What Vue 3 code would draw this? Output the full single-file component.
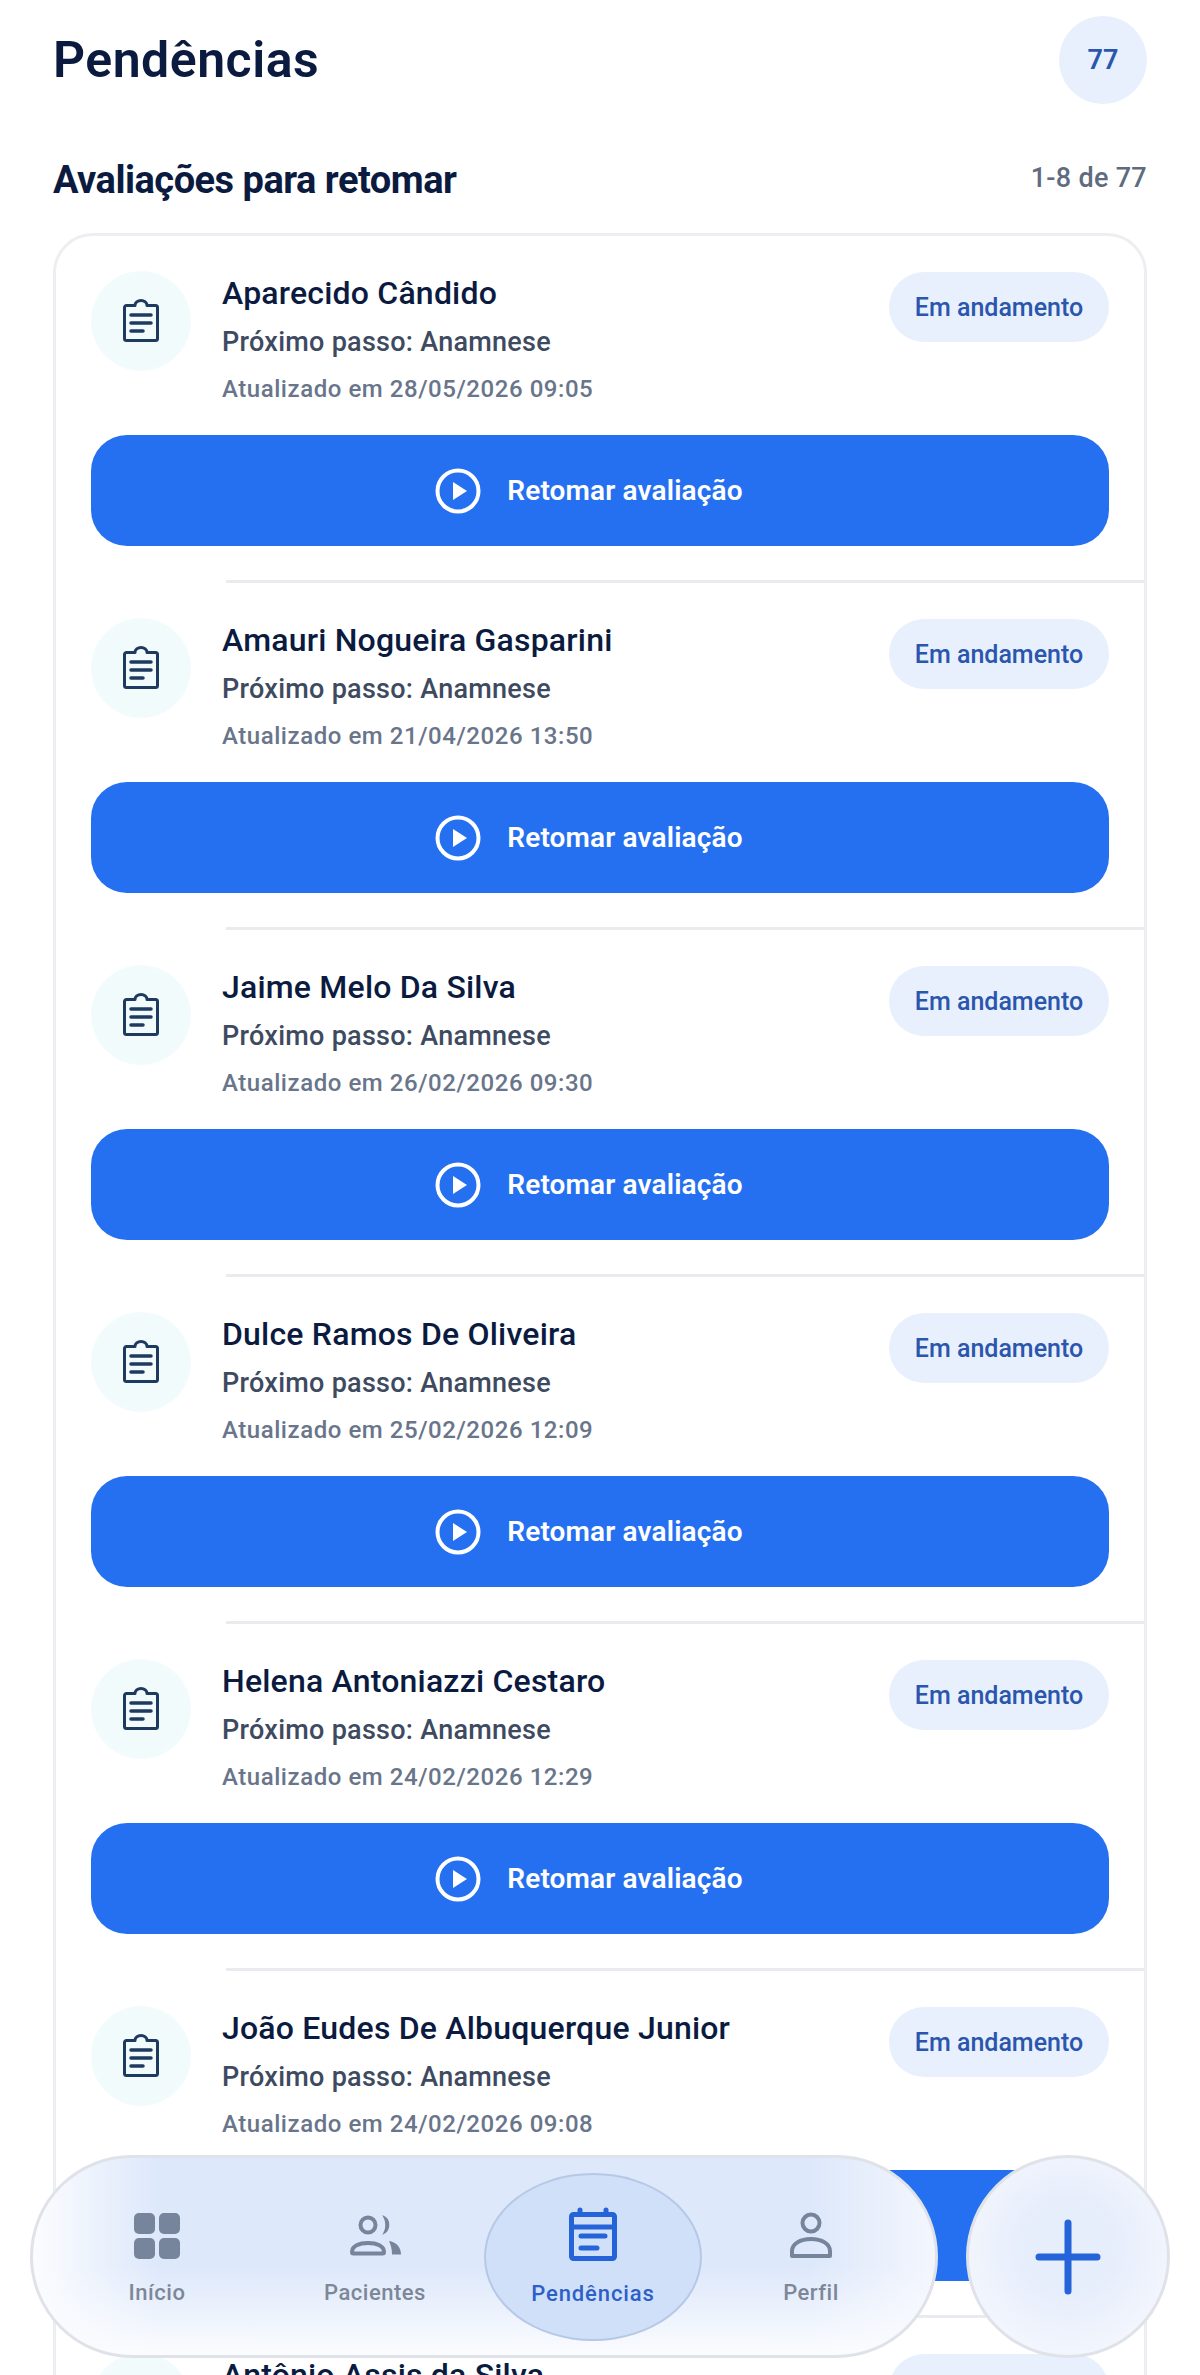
<template>
  <div class="page">
    <header class="top">
      <h1 class="title">Pendências</h1>
      <span class="count">77</span>
    </header>

    <div class="section-head">
      <h2 class="section-title">Avaliações para retomar</h2>
      <span class="range">1-8 de 77</span>
    </div>

    <section class="list">
      <article v-for="item in items" :key="item.name" class="item">
        <div class="item-top">
          <div class="item-icon">
            <svg width="40" height="44" viewBox="0 0 40 44" fill="none" stroke="#1f3a5f" stroke-width="3" stroke-linejoin="round" stroke-linecap="round">
              <path d="M14 6.500a6 5 0 0 1 12 0h8.500a2 2 0 0 1 2 2v31a2 2 0 0 1-2 2h-29a2 2 0 0 1-2-2v-31a2 2 0 0 1 2-2z" />
              <path d="M10 16h20M10 24h20M10 32h12" stroke-width="3.500" />
            </svg>
          </div>
          <div class="item-text">
            <div class="item-name">{{ item.name }}</div>
            <div class="item-step">Próximo passo: Anamnese</div>
            <div class="item-date">Atualizado em {{ item.date }}</div>
          </div>
          <span class="badge">Em andamento</span>
        </div>
        <button class="resume">
          <svg width="46" height="46" viewBox="0 0 46 46" fill="none">
            <circle cx="23" cy="23" r="20.500" stroke="#fff" stroke-width="4" />
            <path d="M18 14v18l14-9z" fill="#fff" />
          </svg>
          <span>Retomar avaliação</span>
        </button>
      </article>
    </section>

    <nav class="nav">
      <a class="nav-item">
        <svg width="48" height="48" viewBox="0 0 48 48" fill="#76849c">
          <rect x="1" y="1" width="21" height="21" rx="5" />
          <rect x="26" y="1" width="21" height="21" rx="5" />
          <rect x="1" y="26" width="21" height="21" rx="5" />
          <rect x="26" y="26" width="21" height="21" rx="5" />
        </svg>
        <span>Início</span>
      </a>
      <a class="nav-item">
        <svg width="52" height="48" viewBox="0 0 52 48" fill="none" stroke="#76849c" stroke-width="4">
          <circle cx="19" cy="13" r="7.500" />
          <path d="M3 40c0-6 7-9 16-9s16 3 16 9a1.500 1.500 0 0 1-1.500 1.500h-29A1.500 1.500 0 0 1 3 40z" />
          <path d="M33 3a10.500 10.500 0 0 1 0 20a17 17 0 0 0 0-20z" fill="#76849c" stroke="none" />
          <path d="M40 29c7 1 12 6 12 13.500H43c0-5-1-9-3-13.500z" fill="#76849c" stroke="none" />
        </svg>
        <span>Pacientes</span>
      </a>
      <a class="nav-item active">
        <svg width="48" height="54" viewBox="0 0 48 54" fill="none" stroke="#2563d9" stroke-width="5" stroke-linecap="round" stroke-linejoin="round">
          <rect x="2.500" y="7.500" width="43" height="44" rx="2" />
          <path d="M2.500 20h43" />
          <path d="M11 3v4M37 3v4" />
          <path d="M12 29h24M12 41h16" />
        </svg>
        <span>Pendências</span>
      </a>
      <a class="nav-item">
        <svg width="44" height="48" viewBox="0 0 44 48" fill="none" stroke="#76849c" stroke-width="4">
          <circle cx="22" cy="11" r="8.500" />
          <path d="M3 39c0-7 8-12 19-12s19 5 19 12v5H3z" stroke-linejoin="round" />
        </svg>
        <span>Perfil</span>
      </a>
    </nav>

    <button class="fab" aria-label="Adicionar">
      <svg width="66" height="76" viewBox="0 0 66 76" fill="none" stroke="#2563d9" stroke-width="7" stroke-linecap="round">
        <path d="M33 4v68M4 38h58" />
      </svg>
    </button>
  </div>
</template>

<script setup>
const items = [
  { name: 'Aparecido Cândido', date: '28/05/2026 09:05' },
  { name: 'Amauri Nogueira Gasparini', date: '21/04/2026 13:50' },
  { name: 'Jaime Melo Da Silva', date: '26/02/2026 09:30' },
  { name: 'Dulce Ramos De Oliveira', date: '25/02/2026 12:09' },
  { name: 'Helena Antoniazzi Cestaro', date: '24/02/2026 12:29' },
  { name: 'João Eudes De Albuquerque Junior', date: '24/02/2026 09:08' },
  { name: 'Antônio Assis da Silva', date: '20/02/2026 10:15' }
];
</script>

<style scoped>
.page {
  position: relative;
  width: 1200px;
  height: 2375px;
  overflow: hidden;
  background: #fff;
  font-family: Roboto, "Liberation Sans", sans-serif;
  box-sizing: border-box;
  padding: 16px 53px 0;
}

.top {
  display: flex;
  justify-content: space-between;
  align-items: center;
  height: 88px;
}

.title {
  margin: 0;
  font-size: 50px;
  line-height: 56px;
  font-weight: 600;
  letter-spacing: 0.5px;
  color: #0b1b3f;
}

.count {
  display: flex;
  align-items: center;
  justify-content: center;
  width: 88px;
  height: 88px;
  border-radius: 50%;
  background: #e8f0fd;
  color: #2a56ad;
  font-size: 27px;
  font-weight: 600;
}

.section-head {
  display: flex;
  justify-content: space-between;
  align-items: center;
  margin-top: 56px;
  height: 40px;
}

.section-title {
  margin: 0;
  font-size: 38px;
  font-weight: 700;
  letter-spacing: -0.5px;
  color: #0b1b3f;
}

.range {
  margin-bottom: 4px;
  font-size: 27px;
  font-weight: 500;
  letter-spacing: 0.3px;
  color: #5f6b7e;
}

.list {
  margin-top: 33px;
  border: 3px solid #eceef1;
  border-radius: 40px;
  box-sizing: border-box;
  height: 2400px;
}

.item {
  position: relative;
  height: 347px;
  box-sizing: border-box;
  padding: 35px 35px 0;
}

.item::after {
  content: "";
  position: absolute;
  left: 170px;
  right: 0;
  bottom: 0;
  height: 3px;
  background: #e9ebee;
}

.item-top {
  display: flex;
  align-items: flex-start;
  height: 162px;
}

.item-icon {
  display: flex;
  align-items: center;
  justify-content: center;
  width: 100px;
  height: 100px;
  flex-shrink: 0;
  border-radius: 50%;
  background: radial-gradient(circle, #f1fbfb 60%, #f8fdfd 100%);
}

.item-text {
  flex: 1;
  margin-left: 31px;
  min-width: 0;
}

.item-name {
  margin-top: 2px;
  font-size: 32px;
  line-height: 40px;
  font-weight: 500;
  letter-spacing: 0.2px;
  color: #0b1b3f;
}

.item-step {
  margin-top: 10px;
  font-size: 27px;
  line-height: 38px;
  font-weight: 500;
  letter-spacing: 0.27px;
  color: #3d4a5f;
}

.item-date {
  margin-top: 10px;
  font-size: 24px;
  line-height: 36px;
  font-weight: 500;
  letter-spacing: 0.55px;
  color: #69758a;
}

.badge {
  display: flex;
  align-items: center;
  justify-content: center;
  width: 220px;
  height: 70px;
  margin-top: 1px;
  flex-shrink: 0;
  border-radius: 35px;
  background: #e8f0fd;
  color: #2a56ad;
  font-size: 25px;
  font-weight: 500;
}

.resume {
  display: flex;
  align-items: center;
  justify-content: center;
  gap: 26px;
  width: 100%;
  height: 111px;
  margin-top: 2px;
  padding: 0 22px 0 0;
  border: 0;
  border-radius: 36px;
  background: #2570f0;
  color: #fff;
  font-family: inherit;
  font-size: 28px;
  font-weight: 600;
  letter-spacing: 0.15px;
}

.nav {
  position: absolute;
  left: 30px;
  top: 2155px;
  display: grid;
  grid-template-columns: repeat(4, 218px);
  justify-content: start;
  align-items: center;
  width: 908px;
  height: 203px;
  box-sizing: border-box;
  padding: 0 0 0 15px;
  border: 3px solid #dfe2e8;
  border-radius: 102px;
  background:
    linear-gradient(180deg, rgba(255, 255, 255, 0) 55%, #fbfcfe 100%),
    linear-gradient(90deg, #fbfcfe 0%, #dde8fb 14%, #dde8fb 86%, #f3f6fd 100%);
}

.nav-item {
  display: flex;
  flex-direction: column;
  align-items: center;
  justify-content: center;
  gap: 20px;
  height: 168px;
  padding-top: 3px;
  box-sizing: border-box;
  color: #7d8798;
  font-size: 22px;
  font-weight: 500;
  letter-spacing: 0.5px;
}

.nav-item.active {
  width: 218px;
  border: 2px solid #b6c8e6;
  border-radius: 50%;
  background: #d1e0f9;
  color: #2d5fc7;
  letter-spacing: 0.9px;
  padding-top: 0;
}

.fab {
  position: absolute;
  left: 966px;
  top: 2155px;
  display: flex;
  align-items: center;
  justify-content: center;
  width: 204px;
  height: 203px;
  padding: 0;
  border: 3px solid #dfe2e8;
  border-radius: 50%;
  background: radial-gradient(circle at 50% 45%, #e6edfb 30%, #fafbfe 100%);
}
</style>
